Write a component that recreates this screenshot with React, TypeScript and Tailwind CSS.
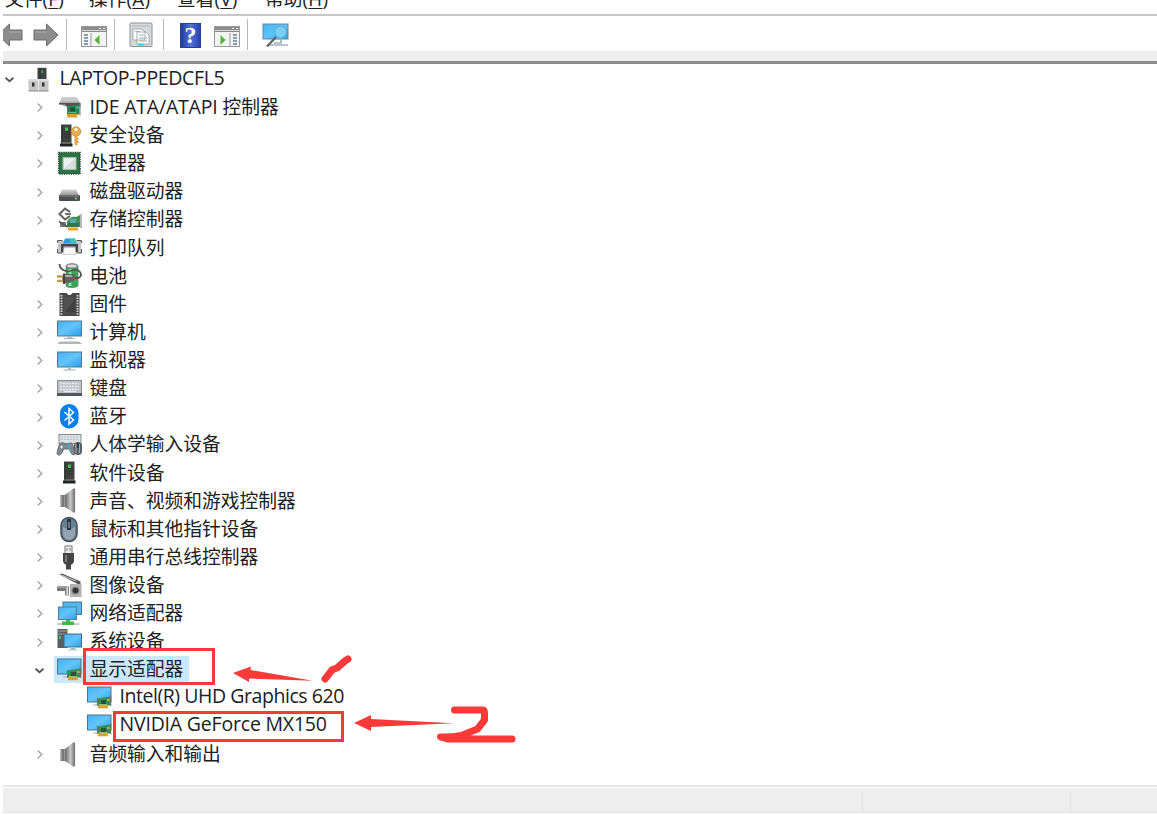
import type { ReactNode } from "react";

function Svg({ children }: { children: ReactNode }) {
  return (
    <svg viewBox="0 0 25 25" className="block h-[25px] w-[25px] shrink-0 overflow-visible">
      {children}
    </svg>
  );
}

function Gradients() {
  return (
    <svg className="absolute h-0 w-0" aria-hidden="true">
      <defs>
        <linearGradient id="screen" x1="0" y1="0" x2="1" y2="1">
          <stop offset="0" stopColor="#45b2f2" />
          <stop offset="0.5" stopColor="#62c4fa" />
          <stop offset="1" stopColor="#2a9deb" />
        </linearGradient>
        <linearGradient id="metal" x1="0" y1="0" x2="1" y2="0">
          <stop offset="0" stopColor="#686868" />
          <stop offset="0.55" stopColor="#c9c9c9" />
          <stop offset="1" stopColor="#707070" />
        </linearGradient>
        <linearGradient id="drive" x1="0" y1="0" x2="0" y2="1">
          <stop offset="0" stopColor="#d6d6d6" />
          <stop offset="1" stopColor="#858585" />
        </linearGradient>
      </defs>
    </svg>
  );
}

function Card() {
  return (
    <g>
      <path d="M11 13.500 22.500 11.500h1.500v9H11z" fill="#3e8b50" />
      <path d="M10.500 13v8M23.700 10.500v10.500" stroke="#62745a" strokeWidth="1" />
      <rect x="14" y="15" width="5" height="4" fill="#24553c" />
      <path d="M20 14h2.500v2H20zM12 19h8v1.500h-8z" fill="#8fc06e" />
      <rect x="11" y="20.500" width="10" height="2.800" fill="#eda52d" />
      <path d="M13 21v2M15.500 21v2M18 21v2" stroke="#bd8223" strokeWidth=".6" />
    </g>
  );
}

function RootIcon() {
  return (
    <Svg>
      <rect x="10.500" y=".8" width="9" height="14" fill="#3e4247" />
      <path d="M12 4h2M12 7h2M12 10h2" stroke="#22262a" />
      <rect x="14.300" y="3.500" width="1.600" height="2.500" fill="#49b85a" />
      <path d="M1.500 12.500h20V24h-20z" fill="#c7c7c7" />
      <path d="M1.500 12h20v2h-20z" fill="#ddd" />
      <path d="M1.500 24h20" stroke="#888" />
      <path d="M11.500 13v10.500" stroke="#eee" />
      <rect x="5" y="15.500" width="2.500" height="4" fill="#303030" />
      <rect x="15" y="15.500" width="2.500" height="4" fill="#303030" />
    </Svg>
  );
}

function IdeIcon() {
  return (
    <Svg>
      <path d="M5 2.500h14.500L24 9v3H10l-3-1-5-2z" fill="#aaa" />
      <path d="M5 2.500h14.500l2.500 4H2.500z" fill="#c9c9c9" />
      <path d="M2 8h21v3H9l-1-1.500H2z" fill="#4c5350" />
      <path d="M10 11 22.500 9.500V19.500H10z" fill="#24895a" />
      <path d="M23 8v12.500" stroke="#74837b" />
      <rect x="13" y="12.500" width="5" height="4" fill="#145a3c" />
      <path d="M19 11.500h2.500v2H19zM11 17h8v1h-8z" fill="#64b986" />
      <rect x="10" y="19" width="10.500" height="3.500" fill="#efa329" />
      <path d="M12.500 19.500v3M15 19.500v3M17.500 19.500v3" stroke="#c37c1a" strokeWidth=".6" />
    </Svg>
  );
}

function Tower() {
  return (
    <g>
      <rect x="7" y="1.500" width="10.500" height="19.500" fill="#404340" />
      <path d="M8.500 2v19M10 8h6M10 11h6M10 14h6" stroke="#2d322f" />
      <path d="M6 20.500h12.500v3H6z" fill="#202424" />
      <path d="M7.500 20H17" stroke="#8b9090" />
      <rect x="11" y="4.500" width="3" height="3.500" fill="#47bc57" />
    </g>
  );
}

function SecurityIcon() {
  return (
    <Svg>
      <g transform="translate(-3 0)"><Tower /></g>
      <circle cx="19" cy="8.500" r="4.800" fill="#e8ad4c" stroke="#b47b2d" strokeWidth=".6" />
      <circle cx="19" cy="6.500" r="1.500" fill="#fff" />
      <path d="M17.500 12h3v9.500l-1.200 1.500-1.800-2z" fill="#e5a846" />
      <path d="M20 15h1.500v1.500H20zM20 18h1.500v1.500H20z" fill="#d19337" />
    </Svg>
  );
}

function CpuIcon() {
  return (
    <Svg>
      <rect x="1.800" y="1.500" width="21.200" height="21.500" fill="#2d7146" stroke="#294e38" strokeDasharray="1.3 1" strokeWidth="1.700" />
      <rect x="3" y="3" width="19" height="18.500" fill="#2c7347" />
      <path d="M6 6.500h13v12H6z" fill="#d7dcdc" stroke="#a9bcae" />
      <path d="M7 7.500h11L7 17.500z" fill="#edf0f0" />
    </Svg>
  );
}

function DiskIcon() {
  return (
    <Svg>
      <path d="M5 10.500h14l3.500 7H2z" fill="url(#drive)" />
      <rect x="2" y="16" width="21" height="6" rx="1" fill="#4b4f4d" />
      <path d="M3 17h19" stroke="#aaa" strokeWidth=".7" />
      <rect x="18" y="18.500" width="2" height="2" fill="#50cf6d" />
    </Svg>
  );
}

function StorageIcon() {
  return (
    <Svg>
      <path d="M13 5 8 1.500 2.500 7 8 12.500l5-3.500" fill="none" stroke="#616161" strokeWidth="2" />
      <path d="M8 7h6" stroke="#666" strokeWidth="1.800" />
      <path d="M3 15h6v5H3z" fill="#767676" />
      <path d="M2 14.500 11 20" stroke="#555" strokeWidth="1.500" />
      <path d="M10 15c1-4 6-6 9-5l4-2v12H10z" fill="#459057" />
      <path d="M10 16h12v4H10z" fill="#2c7656" />
      <path d="M13 12h6v4h-6z" fill="#55a9b0" />
      <path d="M24 7v14" stroke="#717a74" />
      <rect x="11" y="20.500" width="10" height="3" fill="#eda329" />
    </Svg>
  );
}

function PrinterIcon() {
  return (
    <Svg>
      <path d="M1 6h23v12H1z" fill="#c4c4c4" />
      <path d="M8 3.500h10l1.500 5H6z" fill="#289ee0" />
      <path d="M13 3.500h5l1 4h-6z" fill="#37c9af" />
      <path d="M.5 8V5.500h5M24.500 8V5.500h-5M.5 14v4h5M24.500 14v4h-5" fill="none" stroke="#555" />
      <path d="M4 9h17v2.500H4zM4 9h2.500v8H4zM18.500 9H21v8h-2.500z" fill="#424649" />
      <path d="M7 12.500h11l1 7H6z" fill="#f7f7f7" stroke="#aaa" strokeWidth=".5" />
    </Svg>
  );
}

function BatteryIcon() {
  return (
    <Svg>
      <path d="M9 3c0-3 12-3 12 0v20c-2 2-10 2-12 0z" fill="#36a657" stroke="#777" strokeWidth=".8" />
      <ellipse cx="15" cy="3" rx="5.500" ry="2" fill="#d9dce6" stroke="#888" />
      <path d="M13 6v17" stroke="#8fe49b" strokeWidth="3" />
      <path d="M2.500 1c0 4 3 6 6 7 4 2 8-3 12-1 4 2 5 6 1 8h-5" fill="none" stroke="#555" strokeWidth="1.800" />
      <path d="M7 11h7c4 0 5 2 4 5s-5 4-8 4H7l-2-4z" fill="#626262" />
      <path d="M8 12h6l2 2H7z" fill="#aaa" />
      <path d="M0 13.500h7M0 18h7" stroke="#bf9b51" strokeWidth="2.500" />
      <path d="M7 10.500V21" stroke="#4c4338" strokeWidth="2" />
    </Svg>
  );
}

function FirmwareIcon() {
  return (
    <Svg>
      <path d="M2.500 1h7l2 2h2l2-2h7v23h-20z" fill="#494949" />
      <path d="M4.500 3v20M20.500 3v20" stroke="#dedede" strokeWidth="1.800" strokeDasharray="1.500 1.100" />
      <path d="M7 5h11v17H7z" fill="#505050" />
      <path d="M8 20 18 7v14z" fill="#414141" />
    </Svg>
  );
}

function ComputerIcon() {
  return (
    <Svg>
      <rect x=".5" y="1" width="24" height="15" fill="url(#screen)" stroke="#56748a" />
      <path d="M10 17h5v2h-5z" fill="#aac4cc" />
      <path d="M7 18.500h11" stroke="#a2bbc2" />
      <path d="M3 21.500h19l3 2.500H0z" fill="#aeb7b9" />
    </Svg>
  );
}

function MonitorIcon() {
  return (
    <Svg>
      <rect x=".5" y="4" width="24" height="15" fill="url(#screen)" stroke="#56748a" />
      <path d="M11 19.500h3v2h-3z" fill="#aab6ba" />
      <path d="M6.500 22h12" stroke="#acb8bb" strokeWidth="1.200" />
    </Svg>
  );
}

function KeyboardIcon() {
  return (
    <Svg>
      <rect x=".5" y="4.500" width="24" height="15" fill="#bfc3c7" stroke="#858b91" />
      <path d="M3 7.500h19M3 10.500h19M3 13.500h19" stroke="#eceef0" strokeWidth="1.600" strokeDasharray="2 1" />
      <path d="M7 15.500h12" stroke="#e7eaee" strokeWidth="1.200" />
      <path d="M0 18.500h25" stroke="#53575b" strokeWidth="3" />
    </Svg>
  );
}

function BluetoothIcon() {
  return (
    <Svg>
      <rect x="3" y="0" width="18.500" height="24.500" rx="9" fill="#0b80ed" />
      <path d="m7.500 8 9 8-4.500 4V4.500l4.500 4-9 8" fill="none" stroke="#fff" strokeWidth="1.500" />
    </Svg>
  );
}

function HidIcon() {
  return (
    <Svg>
      <rect x="2" y="2.500" width="22" height="9" fill="#dee1e3" stroke="#858b90" />
      <path d="M4 5h18M4 7.500h18" stroke="#b2c2cc" strokeDasharray="2 1" />
      <path d="M2 13c2-3 4-3 6-1h3c2-2 4-1 5 1l2 8c0 3-3 2-4 0l-2-4H7l-3 5c-2 2-4 1-4-1z" fill="#83898c" stroke="#555d63" strokeWidth=".8" />
      <path d="M3 15h3M4.500 13.500v3" stroke="#e8eaec" />
      <path d="m10.500 12 3 7" stroke="#45a9d0" strokeWidth="1.800" />
      <rect x="17" y="10" width="8" height="13" rx="4" fill="#555f67" />
      <path d="M19 12v9M22.500 12v9" stroke="#a8b1b6" />
      <path d="M21 11v5" stroke="#222a30" strokeWidth="1.500" />
    </Svg>
  );
}

function SoftwareIcon() {
  return <Svg><Tower /></Svg>;
}

function SpeakerIcon() {
  return (
    <Svg>
      <path d="M3.500 7H9v12H3.500z" fill="#777" />
      <path d="M8 7 16 .5h2v24h-2L8 19z" fill="url(#metal)" />
      <path d="M4.500 7.500v11M7.500 7.500v11" stroke="#aaa" strokeWidth=".7" />
      <path d="M17.500 1v23" stroke="#7a7a7a" strokeWidth="1.200" />
    </Svg>
  );
}

function MouseIcon() {
  return (
    <Svg>
      <rect x="4" y=".5" width="16" height="24" rx="8" fill="#6b8092" stroke="#444d54" strokeWidth="1.500" />
      <path d="M6 10q6.500 4 12 0v7q-1.500 6-6 6T6 17z" fill="#93a5b4" />
      <path d="M12 2v11" stroke="#293744" strokeWidth="4" />
      <path d="M12 5v6" stroke="#8097a8" strokeWidth="1.500" />
    </Svg>
  );
}

function UsbIcon() {
  return (
    <Svg>
      <rect x="8" y="1" width="7" height="8" fill="#eee" stroke="#777" />
      <path d="M10 3v3M13 3v3" stroke="#777" />
      <path d="M6 8h11v8c0 2-2 3-3 4v4.500H9V20c-1-1-3-2-3-4z" fill="#444" />
      <path d="M9 10v7" stroke="#777" strokeWidth="2" />
    </Svg>
  );
}

function CameraIcon() {
  return (
    <Svg>
      <path d="m2.500 1.500 21 11V8.500L5 .5z" fill="#555" />
      <path d="M4 2 19 8" stroke="#bababa" strokeWidth="1.300" />
      <path d="M0 13h9v5H0z" fill="#777" />
      <path d="M0 14h9" stroke="#c7c7c7" />
      <path d="M8 13h4v9.500H8z" fill="#888" />
      <path d="M9.500 13h1.500v9H9.500z" fill="#ddd" />
      <path d="M13 11h11.500v13H13z" fill="#b3b3b3" />
      <circle cx="18.500" cy="17.500" r="4" fill="#888" />
      <circle cx="18.500" cy="17.500" r="2.800" fill="#333" />
    </Svg>
  );
}

function NetworkIcon() {
  return (
    <Svg>
      <rect x="6" y="1" width="18.500" height="12.500" fill="#50b6ee" stroke="#49758c" />
      <rect x="1.500" y="6" width="18" height="12.500" fill="url(#screen)" stroke="#537e94" />
      <path d="M9 19h4v2H9zM5 20.500h12v3.500H5z" fill="#42b84c" />
      <path d="M0 22h5v2H0zM17 22h5.500v2H17z" fill="#c7ccca" />
    </Svg>
  );
}

function SystemIcon() {
  return (
    <Svg>
      <rect x=".5" y="0" width="10" height="19" fill="#595e62" />
      <path d="M1 2h9M1 5h9" stroke="#a1a5a8" />
      <rect x="2" y="7" width="2" height="3" fill="#4bc665" />
      <rect x="7" y="5" width="17.500" height="13" fill="url(#screen)" stroke="#47687e" />
      <path d="M14 18.500h4v2h-4zM11 21h10" fill="#7ac0e5" stroke="#b8c3c8" />
    </Svg>
  );
}

function DisplayIcon() {
  return (
    <Svg>
      <rect x=".5" y="2" width="23.500" height="15" fill="url(#screen)" stroke="#547087" />
      <path d="M6 20h8" stroke="#a1b1b8" />
      <Card />
    </Svg>
  );
}

type Segment = { text: string; style?: string };
type Node = { level: 0 | 1 | 2; icon: () => ReactNode; label: Segment[]; state?: "open" | "closed"; selected?: boolean };

const item = (text: string, icon: () => ReactNode): Node => ({ level: 1, icon, label: [{ text }], state: "closed" });

const nodes: Node[] = [
  { level: 0, icon: RootIcon, label: [{ text: "LAPTOP-PPEDCFL5", style: "text-[19.5px] tracking-[-0.37px]" }], state: "open" },
  { level: 1, icon: IdeIcon, label: [{ text: "IDE ATA/ATAPI ", style: "text-[19.5px] tracking-[-0.2px]" }, { text: "控制器" }], state: "closed" },
  item("安全设备", SecurityIcon),
  item("处理器", CpuIcon),
  item("磁盘驱动器", DiskIcon),
  item("存储控制器", StorageIcon),
  item("打印队列", PrinterIcon),
  item("电池", BatteryIcon),
  item("固件", FirmwareIcon),
  item("计算机", ComputerIcon),
  item("监视器", MonitorIcon),
  item("键盘", KeyboardIcon),
  item("蓝牙", BluetoothIcon),
  item("人体学输入设备", HidIcon),
  item("软件设备", SoftwareIcon),
  item("声音、视频和游戏控制器", SpeakerIcon),
  item("鼠标和其他指针设备", MouseIcon),
  item("通用串行总线控制器", UsbIcon),
  item("图像设备", CameraIcon),
  item("网络适配器", NetworkIcon),
  item("系统设备", SystemIcon),
  { ...item("显示适配器", DisplayIcon), state: "open", selected: true },
  { level: 2, icon: DisplayIcon, label: [{ text: "Intel(R) UHD Graphics 620", style: "text-[19.5px] tracking-[-0.45px]" }] },
  { level: 2, icon: DisplayIcon, label: [{ text: "NVIDIA GeForce MX150", style: "text-[19.5px] tracking-[-0.2px]" }] },
  item("音频输入和输出", SpeakerIcon),
];

const indent = { 0: "pl-0", 1: "pl-[30px]", 2: "pl-[60px]" };

function Row({ node }: { node: Node }) {
  const Icon = node.icon;
  const latin = node.level !== 1;
  return (
    <div className={`flex h-[28.125px] items-center ${indent[node.level]}`}>
      <svg viewBox="0 0 18 18" className="h-[18px] w-[18px] shrink-0">
        {node.state === "open" && <path d="m5.500 7.700 4 3.500 4-3.500" fill="none" stroke="#555" strokeWidth="1.800" />}
        {node.state === "closed" && <path d="m7.700 5.500 4 4-4 4" fill="none" stroke="#aaa" strokeWidth="1.600" />}
      </svg>
      <div className={`ml-[6px] flex h-[27px] items-center pr-[6px] pl-[3px] ${node.selected ? "bg-[#cce8ff]" : ""}`}>
        <Icon />
        <span className={`ml-[7.500px] whitespace-pre text-[18.75px] leading-[27px] ${latin ? "pb-[4px]" : "pb-[1.5px]"}`}>
          {node.label.map((part) => (
            <span key={part.text} className={part.style}>{part.text}</span>
          ))}
        </span>
      </div>
    </div>
  );
}

function Arrow({ forward = false }: { forward?: boolean }) {
  return (
    <svg viewBox="0 0 26 26" className={`h-[26px] w-[26px] ${forward ? "-scale-x-100" : ""}`}>
      <path d="M1 13 12.500 2v6H25v10H12.500v6z" fill="#8d8d8d" stroke="#6c6c6c" />
      <path d="M12 10h12" stroke="#9d9d9d" strokeWidth="2" />
    </svg>
  );
}

function PanelIcon({ right = false }: { right?: boolean }) {
  return (
    <svg viewBox="0 0 26 22" className="h-[22px] w-[26px]">
      <rect x=".5" y=".5" width="25" height="20" fill="#f4f4f4" stroke="#999" />
      <path d="M1 1h24v5H1z" fill="#8c8c8c" />
      <path d="M1 4.500h24" stroke="#d7d7d7" />
      <path d="M18 2.500h2M22 2.500h2" stroke="#eee" />
      <path d={right ? "M16 7v13" : "M10 7v13"} stroke="#999" />
      <path d={right ? "M19 9h4M19 12h4M19 15h4M19 18h4" : "M3 9h4M3 12h4M3 15h4M3 18h4"} stroke="#6680aa" strokeWidth="1.600" />
      <path d={right ? "m6.500 9 5 5-5 5z" : "m18.500 9-5 5 5 5z"} fill="#55b332" />
    </svg>
  );
}

function PropertiesIcon() {
  return (
    <svg viewBox="0 0 24 26" className="h-[26px] w-6">
      <rect x="1" y="1" width="22" height="23.500" rx="1" fill="#d7d9da" stroke="#8f9294" />
      <path d="M3 4h18" stroke="#b1b5b8" />
      <path d="M4 7h9l3 3v8H4zM8 10h9l3 3v9H8z" fill="#fff" stroke="#96999c" strokeWidth=".8" />
      <path d="M6 9.500h5M10 13h5M10 16h8M10 19h8" stroke="#9eacb3" />
      <path d="M9.500 22.700h5" stroke="#3bc2d6" strokeWidth="1.600" />
    </svg>
  );
}

function ScanIcon() {
  return (
    <svg viewBox="0 0 27 25" className="h-[25px] w-[27px] overflow-visible">
      <rect x="1" y="1" width="25" height="15" fill="url(#screen)" stroke="#668495" />
      <path d="M12 16h7v4h-7M6 22h20" fill="none" stroke="#a3b4bb" strokeWidth="1.700" />
      <circle cx="18.500" cy="9" r="6" fill="#79d0f5" stroke="#5aaed6" strokeWidth="1.200" />
      <path d="M14 14 5 23.500" stroke="#59636a" strokeWidth="2.200" />
    </svg>
  );
}

function Divider() {
  return <div className="-mt-[2px] h-[31px] w-px bg-[#b8b8b8]" />;
}

const menus = [
  { name: "文件", hotkey: "F", width: "w-[84px]" },
  { name: "操作", hotkey: "A", width: "w-[88px]" },
  { name: "查看", hotkey: "V", width: "w-[88px]" },
  { name: "帮助", hotkey: "H", width: "w-[84px]" },
];

export default function App() {
  return (
    <div className="relative flex h-[815px] w-[1157px] flex-col overflow-hidden bg-white font-['Open_Sans','Noto_Sans_CJK_SC',sans-serif] text-[#202020]">
      <Gradients />
      <nav className="ml-[3px] flex h-[16px] shrink-0 items-end overflow-hidden border-b-2 border-[#c8c8c8] pb-[3px] pl-[2px]">
        {menus.map((menu) => (
          <span key={menu.name} className={`block shrink-0 whitespace-nowrap text-[18.75px] leading-[24px] ${menu.width}`}>
            {menu.name}<span className="tracking-[0.3px]">(<span className="underline underline-offset-2">{menu.hotkey}</span>)</span>
          </span>
        ))}
      </nav>
      <div className="ml-[3px] flex h-[35px] shrink-0 items-center overflow-hidden pt-[3px]">
        <div className="ml-[-6px]"><Arrow /></div>
        <div className="ml-[10px]"><Arrow forward /></div>
        <div className="ml-[7px]"><Divider /></div>
        <div className="ml-[14px] mt-[4px]"><PanelIcon /></div>
        <div className="ml-[7px]"><Divider /></div>
        <div className="ml-[14px]"><PropertiesIcon /></div>
        <div className="ml-[10px]"><Divider /></div>
        <div className="ml-[16px] flex h-[25px] w-[21px] items-center justify-center border border-[#263f98] bg-linear-to-r from-[#233b98] via-[#5573dc] to-[#2744ad] font-['Liberation_Serif',serif] text-[24px] font-bold leading-none text-white">?</div>
        <div className="ml-[13px] mt-[4px]"><PanelIcon right /></div>
        <div className="ml-[7px]"><Divider /></div>
        <div className="ml-[14px]"><ScanIcon /></div>
      </div>
      <div className="ml-[3px] h-[13px] shrink-0 border-b-[3px] border-[#8c8c8c] bg-[#eee]" />
      <main className="h-[720px] shrink-0 pt-[1px]">
        {nodes.map((node, index) => <Row key={index} node={node} />)}
      </main>
      <footer className="ml-[3px] mt-[1px] flex h-[28px] shrink-0 flex-col border-t-2 border-[#e7e7e7]">
        <div className="h-px bg-white" />
        <div className="flex flex-1 border-b border-[#e3e3e3] bg-[#eee]">
          <div className="mt-[4px] w-[860px] border-r border-[#dfdfdf]" />
          <div className="mt-[4px] w-[208px] border-r border-[#e2e2e2]" />
        </div>
      </footer>
      <div className="absolute left-[83px] top-[648px] h-[37px] w-[132px] border-3 border-[#fb3939]" />
      <div className="absolute left-[113px] top-[711px] h-[31px] w-[231px] border-3 border-[#fb3939]" />
      <svg viewBox="220 640 320 120" className="absolute left-[220px] top-[640px] h-[120px] w-[320px]">
        <path d="M233 673 251 666.500 250.500 670 312.500 680.700 249 678.500 249 682zM354 723 371 715 371 719 453.500 723.300 371 727 371 731z" fill="#fb3939" />
        <path d="m325 679 7-9 2-1 3-1 8-7 3-2" fill="none" stroke="#fb3939" strokeWidth="7" strokeLinecap="round" strokeLinejoin="round" />
        <path d="M454.500 710H483q1.500 0 1.500 3v7l-7 9-5 2-11 4.500q-12 2-21 1.500l7 2H512" fill="none" stroke="#fb3939" strokeWidth="7" strokeLinecap="round" strokeLinejoin="round" />
      </svg>
    </div>
  );
}
